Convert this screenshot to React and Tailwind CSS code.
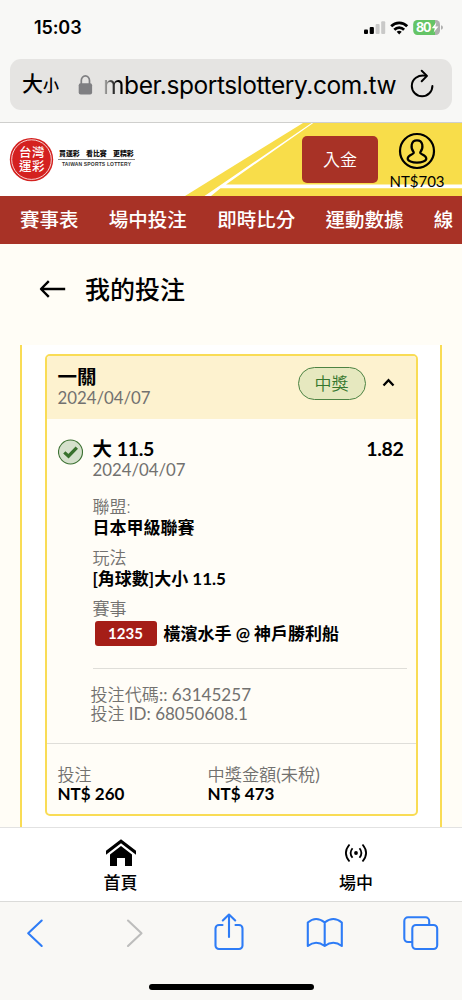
import React from "react";

const WEB = "font-['Lato','Noto_Sans_CJK_TC',sans-serif]";
const IOS = "font-['Inter','Noto_Sans_CJK_TC',sans-serif]";

function StatusBar() {
  return (
    <div className="flex h-[59px] items-start justify-between pl-[34px] pr-[19px] pt-[18px]">
      <div className="text-[18px] font-semibold leading-5 tracking-[-0.1px]">15:03</div>
      <svg className="mt-[1px]" width="80" height="18" viewBox="363 19 80 18">
        <rect x="364" y="29.5" width="4" height="4.5" rx="1" />
        <rect x="369.7" y="27" width="4.2" height="7" rx="1" />
        <rect x="375.6" y="24" width="4" height="10" rx="1" fill="#c9c9c8" />
        <rect x="381.2" y="21.3" width="4" height="12.7" rx="1" fill="#c9c9c8" />
        <g fill="none" stroke="#000" strokeWidth="2.7">
          <path d="M391.2 26.3A11 11 0 0 1 407.2 26.3" />
          <path d="M394.3 29.8A6.8 6.8 0 0 1 404.1 29.8" />
        </g>
        <path d="M396.7 31.8Q399.2 29.9 401.7 31.8L399.2 34.4Z" />
        <clipPath id="bat"><rect x="413.2" y="20" width="26.8" height="15" rx="4.2" /></clipPath>
        <g clipPath="url(#bat)">
          <rect x="413" y="20" width="22" height="15" fill="#65c466" />
          <rect x="435" y="20" width="5.2" height="15" fill="#b0b0af" />
        </g>
        <path d="M441 25.2Q443 25.5 443 27.5T441 29.8Z" fill="#b0b0af" />
        <text x="416" y="32" fontSize="12.5" fontWeight="700" fill="#fff" textLength="15.5">80</text>
        <path d="M436.4 22.3L431.8 28.2H434.8L433.6 32.8L438.4 26.6H435.4Z" fill="#fff" />
      </svg>
    </div>
  );
}

function AddressBar() {
  return (
    <div className="mx-[10px] flex h-[51px] items-center rounded-[11px] bg-[#e5e4e2] pl-3 pr-[17px]">
      <div className="flex w-[53px] items-baseline whitespace-nowrap font-medium leading-[30px]">
        <span className="text-[21px]">大</span>
        <span className="text-[16px]">小</span>
      </div>
      <svg className="ml-[3px] shrink-0" width="15" height="20" viewBox="0 0 15 20">
        <path d="M3.3 9V5.5a4.1 4.6 0 0 1 8.2 0V9" fill="none" stroke="#7f7f82" strokeWidth="1.7" />
        <rect x="0.7" y="8.2" width="13.4" height="11.3" rx="2" fill="#7f7f82" />
      </svg>
      <div className="ml-[10px] w-[300px] whitespace-nowrap text-[24.5px] leading-[30px] tracking-[-0.42px]">
        <span className="bg-linear-to-r from-[#c2c2c0] to-black to-80% bg-clip-text text-transparent">m</span>ber.sportslottery.com.tw
      </div>
      <svg className="-mt-1 ml-auto shrink-0" width="25" height="30" viewBox="410 68 25 30" fill="none" stroke="#000" strokeWidth="2" strokeLinecap="round" strokeLinejoin="round">
        <path d="M426 75.8C418 74.3 411.8 79.2 411.8 85.9A10.3 10.3 0 0 0 432.4 85.9" />
        <path d="M421.7 70.8L427 75.9L421.7 81.2" />
      </svg>
    </div>
  );
}

function Logo() {
  return (
    <svg width="128" height="46" viewBox="9 137 128 46">
      <circle cx="31.5" cy="159.6" r="21.7" fill="#d4211f" />
      <circle cx="31.5" cy="159.6" r="19.8" fill="none" stroke="#fff" strokeWidth="0.8" />
      <g fill="#fff" fontSize="12.5" fontWeight="500">
        <text x="19" y="157.3" textLength="25.5">台灣</text>
        <text x="19" y="170.8" textLength="25.5">運彩</text>
      </g>
      <g fontSize="6.9" fontWeight="900" fill="#111">
        <text x="59" y="156">買運彩</text>
        <text x="86" y="156">看比賽</text>
        <text x="113" y="156">更精彩</text>
      </g>
      <path d="M58 159.5H135" stroke="#555" strokeWidth="0.7" />
      <text x="62" y="166.3" fontSize="5" fontWeight="700" fill="#333" textLength="69" className="font-['Liberation_Sans']">TAIWAN SPORTS LOTTERY</text>
    </svg>
  );
}

function SiteHeader() {
  return (
    <header className="relative flex h-[73px] items-start bg-white">
      <svg className="absolute inset-0" width="462" height="73" viewBox="0 123 462 73">
        <path d="M185 196L303 123H462V196Z" fill="#f8dd4a" />
        <path d="M204.500 196L311.500 123H313.300L226 184.500H462V188.300H220.500L211 196Z" fill="#fff" />
      </svg>
      <div className="relative ml-[9px] mt-[14px]"><Logo /></div>
      <button className="relative ml-[165px] mt-[13px] h-[47px] w-[76px] rounded-[5px] bg-[#a83226] text-[17px] font-[350] leading-[47px] text-white">入金</button>
      <div className="relative ml-[11px] mt-[9px] flex w-[56px] flex-col items-center">
        <svg width="38" height="38" viewBox="0 0 38 38" fill="none" stroke="#000" strokeWidth="2.2">
          <circle cx="19" cy="19" r="17" />
          <path d="M15.700 20.300C12.300 16 12.700 8.300 19 8.300S25.700 16 22.300 20.300C21.300 22.500 28 22.500 28.300 26.500C28.500 29 23.500 30.600 19 30.600S9.500 29 9.700 26.500C10 22.500 16.700 22.500 15.700 20.300Z" strokeLinejoin="round" />
        </svg>
        <div className="mt-[2px] text-[15px] leading-[18px]">NT$703</div>
      </div>
    </header>
  );
}

function Card() {
  const grey = "text-[#72716f]";
  return (
    <section className="h-[462px] w-[373px] overflow-hidden rounded-[5px] border-[2.5px] border-[#f9dc55] bg-[#fffdf7] text-[17px]">
      <div className="flex h-[63px] justify-between bg-[#fdf2cf] pl-[11px] pr-[21px] pt-[11px]">
        <div>
          <div className="text-[19.5px] font-bold leading-5">一關</div>
          <div className={`pt-px text-[16.8px] leading-5 ${grey}`}>2024/04/07</div>
        </div>
        <div className="flex h-[33px] items-center">
          <span className="mt-[-1px] h-[33px] w-[68px] rounded-full border border-[#4d8343] bg-[#e6e8bf] text-center text-[17px] font-[350] leading-[31px] text-[#36772e]">中獎</span>
          <svg className="-mt-[2px] ml-4" width="13" height="9" viewBox="0 0 13 9" fill="none" stroke="#000" strokeWidth="2.300"><path d="M1.500 7.500L6.500 2.200L11.500 7.500" /></svg>
        </div>
      </div>

      <div className="ml-[11px] mr-[9px] flex pt-5">
        <svg className="shrink-0" width="26" height="26" viewBox="0 0 26 26">
          <circle cx="12.500" cy="13" r="12" fill="#d5e0cc" stroke="#3c7132" strokeWidth="1.100" />
          <path d="M6.300 13.400L10.500 17.200L18.800 8.600" fill="none" stroke="#38702d" strokeWidth="3.300" />
        </svg>
        <div className="ml-[9px] grow">
          <div className="flex justify-between pr-[3px] text-[19.5px] font-bold leading-5">
            <span>大 <span className="tracking-[-0.3px]">11.5</span></span><span className="tracking-[-0.3px]">1.82</span>
          </div>
          <div className={`text-[16.8px] leading-[21px] ${grey}`}>2024/04/07</div>
          <dl className="mt-[16px] leading-[21px]">
            <dt className={`font-[350] ${grey}`}>聯盟:</dt>
            <dd className="font-bold">日本甲級聯賽</dd>
            <dt className={`mt-[9px] font-[350] ${grey}`}>玩法</dt>
            <dd className="font-bold">[角球數]大小 11.5</dd>
            <dt className={`mt-[9px] font-[350] ${grey}`}>賽事</dt>
            <dd className="mt-[2px] flex items-center font-bold">
              <span className="ml-[2px] h-[25px] w-[62px] rounded-[3px] bg-[#a51e17] text-center text-[15px] leading-[25px] text-white">1235</span>
              <span className="ml-[7px] whitespace-nowrap">橫濱水手 @ 神戶勝利船</span>
            </dd>
          </dl>
          <div className="mt-[22px] h-px bg-[#dfded9]" />
          <div className={`-ml-[2px] mt-[16px] leading-[19px] ${grey}`}>
            <div className="text-[17.1px]"><span className="font-[350]">投注代碼</span>:: 63145257</div>
            <div><span className="font-[350]">投注</span> ID: 68050608.1</div>
          </div>
        </div>
      </div>

      <div className="mt-5 flex border-t border-[#dfded9] pl-[11px] pt-[21px] leading-[19px]">
        <div className="w-[150px]">
          <div className={`font-[350] ${grey}`}>投注</div>
          <div className="font-bold">NT$ 260</div>
        </div>
        <div>
          <div className={`text-[17.2px] ${grey}`}><span className="font-[350]">中獎金額</span>(<span className="font-[350]">未稅</span>)</div>
          <div className="font-bold">NT$ 473</div>
        </div>
      </div>
    </section>
  );
}

function TabBar() {
  return (
    <nav className="flex h-[74px] border-t border-[#e2e2e2] bg-white text-[17px] font-medium leading-5">
      <div className="ml-[84px] flex w-[73px] flex-col items-center pt-[10px]">
        <svg width="32" height="30" viewBox="0 0 32 30">
          <path d="M1 12.800L16 1.200L31 12.800V16.700L16 5.200L1 16.700Z" />
          <path d="M5 16.500L16 8L27 16.500V28H20V20H12V28H5Z" />
        </svg>
        <div className="mt-[5px]">首頁</div>
      </div>
      <div className="ml-[163px] flex w-[72px] flex-col items-center pt-[10px]">
        <svg width="24" height="30" viewBox="0 0 24 30" fill="none" stroke="#000" strokeWidth="1.800">
          <circle cx="12" cy="15" r="1.900" fill="#000" stroke="none" />
          <path d="M8.500 10.200Q4.700 15 8.500 19.800M15.500 10.200Q19.300 15 15.500 19.800M5.500 6.500Q-1.700 15 5.500 23.500M18.500 6.500Q25.700 15 18.500 23.500" />
        </svg>
        <div className="mt-[5px]">場中</div>
      </div>
    </nav>
  );
}

function Toolbar() {
  return (
    <footer className="flex h-[99px] flex-col items-center border-t border-[#dbdbd9] bg-[#f9f8f5]">
      <svg width="462" height="54" viewBox="0 902 462 54" fill="none" stroke="#2e7cf6" strokeWidth="2.100" strokeLinecap="round" strokeLinejoin="round">
        <path d="M41.700 920.500L28.200 933.300L41.700 946" />
        <path d="M128 920.500L141.500 933.300L128 946" stroke="#bdbdbc" />
        <path d="M222.500 925H219a3.500 3.500 0 0 0-3.500 3.500V945.500a3.500 3.500 0 0 0 3.500 3.500H239a3.500 3.500 0 0 0 3.500-3.500V928.500a3.500 3.500 0 0 0-3.500-3.500H235.500M229 937V915M222.800 920.500L229 914.500L235.200 920.500" />
        <path d="M324.700 922.500Q316 915.500 307.800 922.500V946Q316 939.500 324.700 946Q333.400 939.500 341.800 946V922.500Q333.400 915.500 324.700 922.500ZM324.700 922.500V946" />
        <path d="M412 942H408a3.700 3.700 0 0 1-3.700-3.700V921a3.700 3.700 0 0 1 3.700-3.700H425.500a3.700 3.700 0 0 1 3.700 3.700V924.500" />
        <rect x="412.300" y="925" width="24.900" height="24" rx="3.700" />
      </svg>
      <div className="mt-[28px] h-[6px] w-[165px] rounded-full bg-black" />
    </footer>
  );
}

export default function App() {
  return (
    <div className={`flex h-[1000px] w-[462px] flex-col overflow-hidden bg-[#fffdf6] text-black ${WEB}`}>
      <div className={`h-[123px] shrink-0 border-b border-[#cfcfcd] bg-[#f8f8f6] ${IOS}`}>
        <StatusBar />
        <AddressBar />
      </div>
      <SiteHeader />
      <nav className="flex h-[48px] shrink-0 gap-[30.300px] overflow-hidden whitespace-nowrap bg-[#a83226] pl-5 text-[19.500px] font-medium leading-[48px] text-white">
        <span>賽事表</span><span>場中投注</span><span>即時比分</span><span>運動數據</span><span>線</span>
      </nav>
      <div className="flex h-[101px] shrink-0 items-start pl-[39px] pt-[30px]">
        <svg className="mt-[5px]" width="27" height="20" viewBox="0 0 27 20" fill="none" stroke="#000" strokeWidth="2.400" strokeLinejoin="round">
          <path d="M26.200 10H2M9.800 2.200L2 10L9.800 17.800" />
        </svg>
        <h1 className="ml-[19px] text-[25px] font-medium leading-[30px]">我的投注</h1>
      </div>
      <main className="mx-5 min-h-0 grow overflow-hidden border-x-2 border-[#f9dc55] bg-white pl-[22.500px] pt-[9px]">
        <Card />
      </main>
      <div className="shrink-0">
        <TabBar />
        <Toolbar />
      </div>
    </div>
  );
}
